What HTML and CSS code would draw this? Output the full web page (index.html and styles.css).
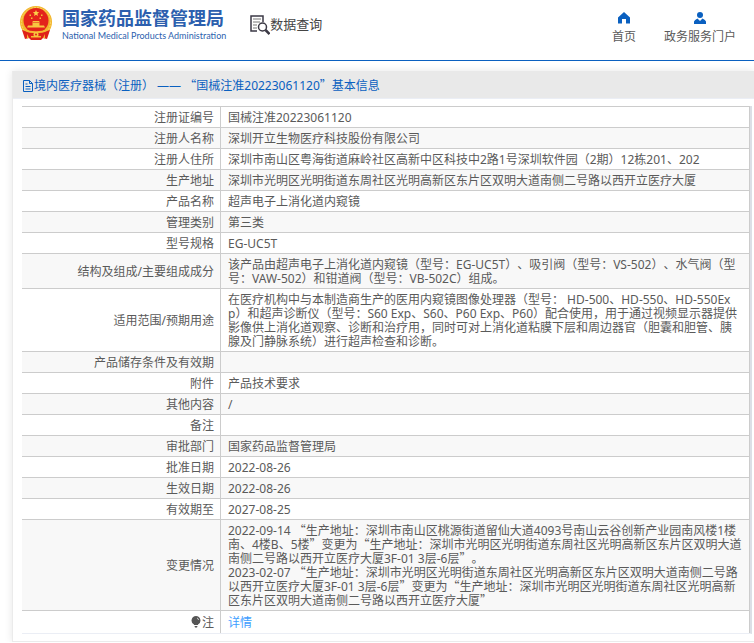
FILE: index.html
```html
<!DOCTYPE html>
<html lang="zh-CN">
<head>
  <meta charset="UTF-8">
  <meta name="viewport" content="width=device-width, initial-scale=1">
  <title>国家药品监督管理局 - 数据查询</title>
  <link rel="stylesheet" href="styles.css">
</head>
<body>
  <header class="top-bar">
    <a class="logo" href="#">
      <svg class="emblem" viewBox="0 0 34 36" aria-hidden="true">
        <circle cx="17" cy="17" r="16" fill="#f3b62c"/>
        <circle cx="17" cy="17" r="14.5" fill="none" stroke="#f9d368" stroke-width="1" stroke-dasharray="2 1"/>
        <circle cx="17" cy="15.5" r="12.5" fill="#e3231b"/>
        <path d="M17 5l.9 2.100 2.300.2-1.800 1.500.6 2.200-2-1.200-2 1.200.6-2.200-1.800-1.500 2.300-.2z" fill="#fbd24a"/>
        <path d="M10.500 9.500H12V11h-1.500zM22 9.500h1.500V11H22zM12 12.500h1.500V14H12zM20.500 12.500H22V14h-1.500z" fill="#f6bd38"/>
        <path d="M13 17.500l1-1.500h6l1 1.500zM13.500 18h7v2.500h4.500l1 2H8l1-2h4.500z" fill="#f8c740"/>
        <path d="M3 25c8 3 20 3 28 0l-3 9-4-1-2 2H12l-2-2-4 1z" fill="#df2119"/>
        <path d="M6 24c5 3 17 3 22 0v2c-5 3-17 3-22 0zM12 31h10v1.500H12zM8 29l2 4-2 .5zM26 29l-2 4 2 .5z" fill="#f5b832"/>
        <circle cx="17" cy="29.5" r="2.500" fill="#f8c740"/>
        <circle cx="17" cy="29.5" r="1" fill="#df2119"/>
      </svg>
      <span class="logo-text">
        <strong>国家药品监督管理局</strong>
        <span class="logo-en">National Medical Products Administration</span>
      </span>
    </a>
    <a class="query" href="#">
      <svg width="20" height="20" viewBox="0 0 20 20" fill="none" stroke="#3b3945" aria-hidden="true">
        <path d="M7 16H1V1h12v6" stroke-width="1.500"/>
        <path d="M3 4h8M3 7h7M3 10h4M3 13h4" stroke="#777"/>
        <circle cx="12.500" cy="12" r="4" stroke-width="1.500"/>
        <path d="M15.500 15l4 4" stroke-width="2.500"/>
      </svg>
      <span>数据查询</span>
    </a>
    <nav class="top-nav">
      <a href="#">
        <svg width="12" height="12" viewBox="0 0 12 12" aria-hidden="true"><path d="M6 0L0 5.500v6h4V7h4v4.500h4v-6z" fill="#0a60c0"/></svg>
        <span>首页</span>
      </a>
      <a href="#">
        <svg width="12" height="12" viewBox="0 0 12 12" aria-hidden="true"><circle cx="6" cy="3" r="3" fill="#0a60c0"/><path d="M0 12V9.500Q.5 8 3.500 6.500L6 9l2.500-2.500Q11.500 8 12 9.500V12z" fill="#0a60c0"/></svg>
        <span>政务服务门户</span>
      </a>
    </nav>
  </header>

  <main class="panel">
    <h1 class="panel-title">
      <svg width="10" height="12" viewBox="0 0 10 12" fill="none" stroke="#0a60c0" aria-hidden="true"><path d="M.5.5h6l3 3v8h-9zM6.500.5v3h3M2.500 4h2M2.500 6.500h5M2.500 9h5"/></svg>
      <span>境内医疗器械（注册） —— <q>“</q>国械注准20223061120<q>”</q>基本信息</span>
    </h1>
    <div class="panel-body">
      <table class="detail">
        <tbody>
          <tr><th scope="row">注册证编号</th><td>国械注准20223061120</td></tr>
          <tr><th scope="row">注册人名称</th><td>深圳开立生物医疗科技股份有限公司</td></tr>
          <tr><th scope="row">注册人住所</th><td>深圳市南山区粤海街道麻岭社区高新中区科技中2路1号深圳软件园（2期）12栋201、202</td></tr>
          <tr><th scope="row">生产地址</th><td>深圳市光明区光明街道东周社区光明高新区东片区双明大道南侧二号路以西开立医疗大厦</td></tr>
          <tr><th scope="row">产品名称</th><td>超声电子上消化道内窥镜</td></tr>
          <tr><th scope="row">管理类别</th><td>第三类</td></tr>
          <tr><th scope="row">型号规格</th><td>EG-UC5T</td></tr>
          <tr><th scope="row">结构及组成/主要组成成分</th><td>该产品由超声电子上消化道内窥镜（型号：EG-UC5T）、吸引阀（型号：VS-502）、水气阀（型号：VAW-502）和钳道阀（型号：VB-502C）组成。</td></tr>
          <tr><th scope="row">适用范围/预期用途</th><td>在医疗机构中与本制造商生产的医用内窥镜图像处理器（型号： HD-500、HD-550、HD-550Exp）和超声诊断仪（型号：S60 Exp、S60、P60 Exp、P60）配合使用，用于通过视频显示器提供影像供上消化道观察、诊断和治疗用，同时可对上消化道粘膜下层和周边器官（胆囊和胆管、胰腺及门静脉系统）进行超声检查和诊断。</td></tr>
          <tr><th scope="row">产品储存条件及有效期</th><td></td></tr>
          <tr><th scope="row">附件</th><td>产品技术要求</td></tr>
          <tr><th scope="row">其他内容</th><td>/</td></tr>
          <tr><th scope="row">备注</th><td></td></tr>
          <tr><th scope="row">审批部门</th><td>国家药品监督管理局</td></tr>
          <tr><th scope="row">批准日期</th><td>2022-08-26</td></tr>
          <tr><th scope="row">生效日期</th><td>2022-08-26</td></tr>
          <tr><th scope="row">有效期至</th><td>2027-08-25</td></tr>
          <tr><th scope="row">变更情况</th><td>2022-09-14 <q>“</q>生产地址：深圳市南山区桃源街道留仙大道4093号南山云谷创新产业园南风楼1楼南、4楼B、5楼<q>”</q>变更为<q>“</q>生产地址：深圳市光明区光明街道东周社区光明高新区东片区双明大道南侧二号路以西开立医疗大厦3F-01 3层-6层<q>”</q>。<br>2023-02-07 <q>“</q>生产地址：深圳市光明区光明街道东周社区光明高新区东片区双明大道南侧二号路以西开立医疗大厦3F-01 3层-6层<q>”</q>变更为<q>“</q>生产地址：深圳市光明区光明街道东周社区光明高新区东片区双明大道南侧二号路以西开立医疗大厦<q>”</q></td></tr>
          <tr class="note">
            <th scope="row"><svg width="10" height="12" viewBox="0 0 10 12" aria-hidden="true"><path d="M5 0a4.500 4.500 0 0 1 2 8.500V9H3v-.5A4.500 4.500 0 0 1 5 0zM3.500 10h3l-.5 1.500H4z" fill="#555"/><path d="M6 2q1.500.5 1.500 2" fill="none" stroke="#ccc"/></svg>注</th>
            <td><a href="#">详情</a></td>
          </tr>
        </tbody>
      </table>
    </div>
  </main>
</body>
</html>
```
FILE: styles.css
```css
* { box-sizing: border-box; }

body {
  margin: 0;
  background: #fff;
  color: #5a5a5a;
  font-family: "Noto Sans", "Noto Sans CJK SC", sans-serif;
  font-size: 12px;
  line-height: 14px;
  text-spacing-trim: space-all;
}
a { color: inherit; text-decoration: none; }
svg { flex: none; }

/* full-width Chinese quotation marks */
q {
  font-family: "Noto Sans CJK SC", sans-serif;
  line-height: 12px;
  quotes: none;
}

/* 顶部 */
.top-bar {
  display: flex;
  height: 61px;
  padding: 0 18px 0 19px;
  border-bottom: 1px solid #0a60c0;
}
.logo {
  display: flex;
  gap: 9px;
  padding-top: 5px;
  color: #2c5fae;
}
.emblem { width: 34px; height: 36px; }
.logo-text { display: flex; flex-direction: column; }
.logo-text strong { font-size: 18px; line-height: 26px; }
.logo-en {
  font-family: Lato, "Liberation Sans", sans-serif;
  font-size: 9px;
  line-height: 10px;
}
.query {
  display: flex;
  align-items: flex-start;
  margin-left: 24px;
  padding-top: 15px;
  color: #444;
  font-size: 13px;
  line-height: 18px;
}
.top-nav {
  display: flex;
  gap: 28px;
  margin-left: auto;
  padding-top: 12px;
}
.top-nav a {
  display: flex;
  flex-direction: column;
  align-items: center;
  gap: 6px;
}

/* 内容面板 */
.panel {
  margin: 10px 0 0 12px;
  border: 1px solid #ebebeb;
  border-width: 0 0 1px 1px;
  box-shadow: 0 0 8px rgba(0, 0, 0, .1);
}
.panel-title {
  display: flex;
  align-items: center;
  height: 28px;
  margin: 0;
  padding: 2px 10px 0;
  background: #e9e9e9;
  border-bottom: 1px solid #ebeef5;
  color: #0a60c0;
  font-size: 12px;
  font-weight: normal;
}
.panel-title svg { margin-right: 1px; }
.panel-body { padding: 7px 2px 7px 9px; }

/* 详情表格 */
.detail {
  width: 100%;
  border-collapse: separate;
  border-spacing: 0;
  border-right: 2px solid #dcdfe6;
  border-bottom: 1px solid #ebeef5;
}
.detail th,
.detail td {
  height: 21px;
  padding: 4px 7px 2px;
  border-top: 1px solid #ccc;
  word-break: break-all;
}
.detail th {
  width: 198px;
  padding-right: 6px;
  font-weight: normal;
  text-align: right;
}
.detail td {
  border-right: 1px solid #ccc;
  border-left: 1px solid #ccc;
}
.detail tr:nth-child(even) { background: #f8f8f8; }
.detail .note th,
.detail .note td { height: 23px; }
.note svg { margin-right: 1px; vertical-align: -1px; }
.note a { color: #409eff; }
```
